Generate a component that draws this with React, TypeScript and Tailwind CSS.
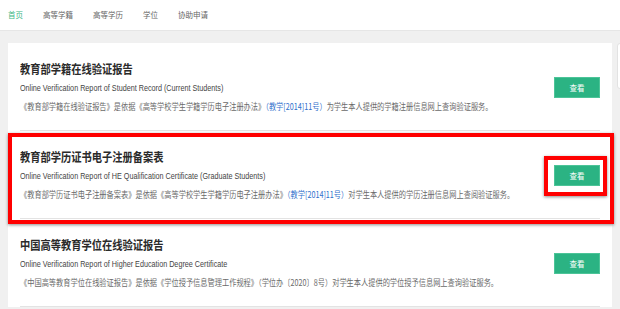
import React from "react";

interface Report {
  title: string;
  subtitle: string;
  before: string;
  link: string;
  after: string;
}

const REPORTS: Report[] = [
  {
    title: "教育部学籍在线验证报告",
    subtitle: "Online Verification Report of Student Record (Current Students)",
    before: "《教育部学籍在线验证报告》是依据《高等学校学生学籍学历电子注册办法》",
    link: "（教学[2014]11号）",
    after: "为学生本人提供的学籍注册信息网上查询验证服务。",
  },
  {
    title: "教育部学历证书电子注册备案表",
    subtitle: "Online Verification Report of HE Qualification Certificate (Graduate Students)",
    before: "《教育部学历证书电子注册备案表》是依据《高等学校学生学籍学历电子注册办法》",
    link: "（教学[2014]11号）",
    after: "对学生本人提供的学历注册信息网上查阅验证服务。",
  },
  {
    title: "中国高等教育学位在线验证报告",
    subtitle: "Online Verification Report of Higher Education Degree Certificate",
    before: "《中国高等教育学位在线验证报告》是依据《学位授予信息管理工作规程》（学位办〔2020〕8号）对学生本人提供的学位授予信息网上查询验证服务。",
    link: "",
    after: "",
  },
];

const NAV = ["首页", "高等学籍", "高等学历", "学位", "协助申请"];

function ReportRow({ report }: { report: Report }) {
  return (
    <div className="h-[88px] border-b border-[#e3e3e3] flex items-start justify-between">
      <div className="flex-1 min-w-0 pt-[18px]">
        <div className="scale-x-[0.82] origin-left whitespace-nowrap">
          <p className="text-[12.5px] leading-[16px] font-bold text-[#2a2a2a]">
            {report.title}
          </p>
          <p className="mt-[5px] text-[8.8px] leading-[12px] text-[#444] font-['Liberation_Sans',sans-serif]">
            {report.subtitle}
          </p>
          <p className="mt-[7px] text-[8.8px] leading-[12px] text-[#6a6a6a]">
            {report.before}
            {report.link && <span className="text-[#2f6fcc]">{report.link}</span>}
            {report.after}
          </p>
        </div>
      </div>
      <button
        type="button"
        className="mt-[34px] w-[46px] h-[21px] flex-shrink-0 bg-[#2bb383] border border-[#4cc498] text-white text-[7.5px] flex items-center justify-center"
      >
        查看
      </button>
    </div>
  );
}

export default function App() {
  return (
    <div className="relative w-[620px] h-[309px] overflow-hidden bg-[#f0f0f0] font-['Noto_Sans_CJK_SC','Noto_Sans',sans-serif]">
      <nav className="h-[31px] bg-white border-b border-[#e6e6e6] flex items-center pl-2 gap-5 text-[7.5px] text-[#666]">
        {NAV.map((item, i) => (
          <span key={item} className={i === 0 ? "text-[#3cb784]" : ""}>
            {item}
          </span>
        ))}
      </nav>

      <div className="flex items-start pt-3 pl-2 gap-[5px]">
        <div className="w-[604px] flex-shrink-0 bg-white px-3">
          {REPORTS.map((r) => (
            <ReportRow key={r.title} report={r} />
          ))}
        </div>
        <div className="w-[20px] h-[46px] flex-shrink-0 bg-white border border-[#e2e2e2] rounded-[3px]" />
      </div>

      {/* red highlight boxes */}
      <div className="absolute left-[8px] top-[133px] w-[606px] h-[91px] border-4 border-[#ff0000] shadow-[0_1px_3px_rgba(0,0,0,0.45)]" />
      <div className="absolute left-[544px] top-[156px] w-[63px] h-[40px] border-4 border-[#ff0000] shadow-[0_1px_3px_rgba(0,0,0,0.45)]" />
    </div>
  );
}
